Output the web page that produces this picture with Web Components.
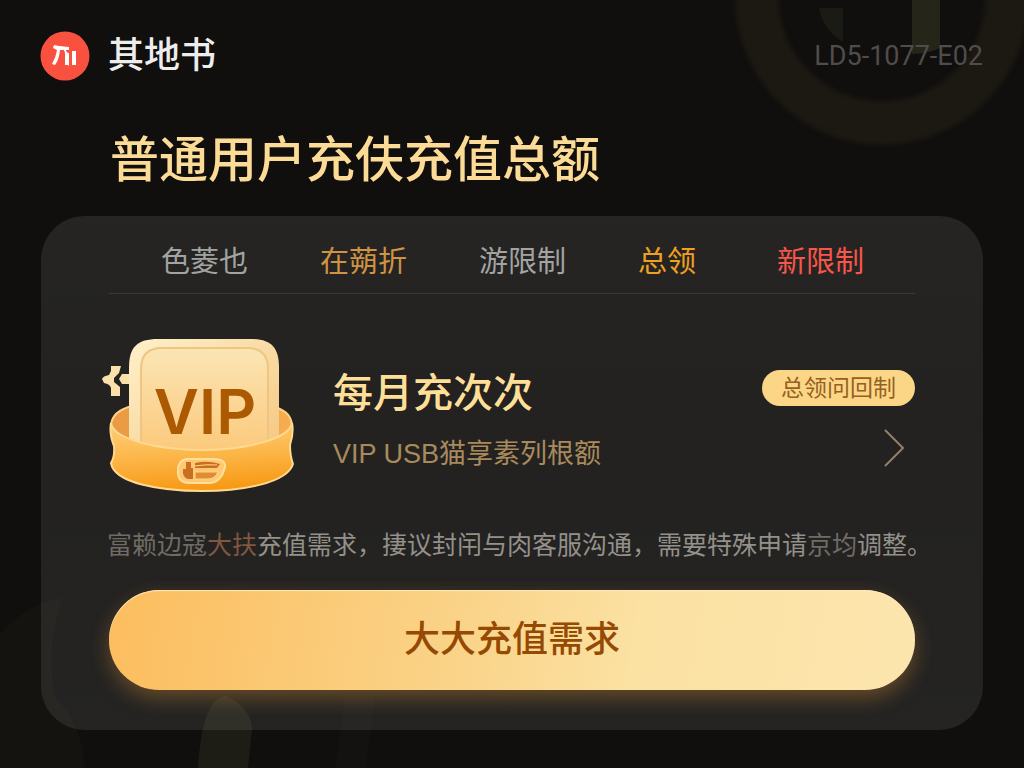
<!DOCTYPE html>
<html lang="zh-CN">
<head>
<meta charset="utf-8">
<meta name="viewport" content="width=device-width, initial-scale=1">
<title>其地书</title>
<style>
  body {
    margin: 0;
    background: #100f0e;
    color: #eee;
    font-family: "Liberation Sans", "Noto Sans CJK SC", sans-serif;
  }
</style>
</head>
<body>
<vip-page>
  <page-header slot="header" code="LD5-1077-E02">其地书</page-header>
  <page-title slot="title">普通用户充伕充值总额</page-title>
  <vip-card>
    <tab-strip slot="tabs">
      <tab-item>色菱也</tab-item>
      <tab-item tone="amber">在蒴折</tab-item>
      <tab-item>游限制</tab-item>
      <tab-item tone="gold">总领</tab-item>
      <tab-item tone="red">新限制</tab-item>
    </tab-strip>
    <plan-row>
      <vip-medal slot="icon"></vip-medal>
      <span slot="name">每月充次次</span>
      <span slot="detail">VIP USB猫享素列根额</span>
      <span slot="badge">总领问回制</span>
    </plan-row>
    <plan-note><note-mark>富赖边寇</note-mark><note-mark tone="rust">大扶</note-mark>充值需求，捿议封闬与肉客服沟通，需要特殊申请<note-mark>京均</note-mark>调整。</plan-note>
    <primary-button>大大充值需求</primary-button>
  </vip-card>
</vip-page>

<script>
const define = (name, html, setup) => {
  const template = document.createElement('template');
  template.innerHTML = html.trim();
  customElements.define(name, class extends HTMLElement {
    constructor() {
      super();
      this.attachShadow({ mode: 'open' }).append(template.content.cloneNode(true));
    }
    connectedCallback() { if (setup) setup(this, this.shadowRoot); }
  });
};

define('vip-page', `
  <style>
    :host { display: block; position: relative; overflow: hidden; min-height: 100vh; box-sizing: border-box; padding: 31px 41px 38px; }
    .decor { position: absolute; pointer-events: none; }
    .ring { top: 0; right: 0; }
    .flame { bottom: 0; left: 0; }
    main { position: relative; }
  </style>
  <svg class="decor ring" width="300" height="170" viewBox="0 0 300 170" aria-hidden="true">
    <defs><filter id="soft" x="-10%" y="-10%" width="120%" height="120%" color-interpolation-filters="sRGB"><feGaussianBlur stdDeviation="2"/></filter></defs>
    <circle cx="158" cy="-2" r="125" fill="none" stroke="#1c1812" stroke-width="44" filter="url(#soft)"/>
    <path d="M95 8h24v34q-20-12-24-34z" fill="#1b1b16"/>
    <path d="M188 0h28v48q-14 6-28 6z" fill="#26251a"/>
  </svg>
  <svg class="decor flame" width="420" height="190" viewBox="0 0 420 190" aria-hidden="true">
    <path d="M0 55Q30 24 62 20Q44 80 56 120Q84 150 84 190H0z" fill="#141310"/>
    <path d="M198 190Q202 120 226 118Q252 130 252 152L248 190z" fill="#1d1c15"/>
    <path d="M335 190L345 120H375L366 190z" fill="#131210"/>
  </svg>
  <main>
    <slot name="header"></slot>
    <slot name="title"></slot>
    <slot></slot>
  </main>`);

define('page-header', `
  <style>
    :host { display: block; }
    header { display: flex; align-items: center; gap: 18px; height: 50px; }
    svg { flex: none; margin-left: -1px; }
    .brand { font-size: 36px; line-height: 50px; font-weight: 500; color: #ededed; }
    .code { margin-left: auto; font-family: Roboto, sans-serif; font-size: 27px; color: #504c4a; }
  </style>
  <header>
    <svg width="50" height="50" viewBox="0 0 50 50" role="img" aria-label="logo">
      <circle cx="25" cy="25" r="24.5" fill="#f9513f"/>
      <path d="M13 17l1-3 5 1 10 1v3h-3v3h3v12h-4V22l-1-3h-4q-1 10-5 15l-3-1q4-7 5-14zM26 20l3 3v12l-3-3zM32 20h4v14h-4z" fill="#fff"/>
    </svg>
    <span class="brand"><slot></slot></span>
    <span class="code"></span>
  </header>`, (el, root) => {
  root.querySelector('.code').textContent = el.getAttribute('code');
});

define('page-title', `
  <style>
    :host { display: block; }
    h1 { margin: 49px 0 25px 69px; font-size: 49px; line-height: 61px; font-weight: 500; color: #fbdb95; }
  </style>
  <h1><slot></slot></h1>`);

define('vip-card', `
  <style>
    :host { display: block; }
    section {
      padding: 16px 68px 40px;
      border-radius: 44px;
      background: linear-gradient(rgba(255,255,255,.09), rgba(255,255,255,.08) 40%, rgba(255,255,255,.085));
    }
  </style>
  <section>
    <slot name="tabs"></slot>
    <slot></slot>
  </section>`);

define('tab-strip', `
  <style>
    :host { display: block; }
    div { display: flex; gap: 72px; padding: 8px 51px 9px 52px; border-bottom: 1px solid #42372f; }
    ::slotted(:last-child) { margin-left: auto; }
  </style>
  <div role="tablist"><slot></slot></div>`);

define('tab-item', `
  <style>
    :host { display: block; color: #a3a3a2; }
    :host([tone=amber]) { color: #cf9343; }
    :host([tone=gold]) { color: #f0a020; }
    :host([tone=red]) { color: #f8564a; }
    button { display: block; margin: 0; padding: 0; border: 0; background: none; color: inherit; font: inherit; font-size: 29px; line-height: 44px; white-space: nowrap; cursor: pointer; }
  </style>
  <button type="button" role="tab"><slot></slot></button>`);

define('plan-row', `
  <style>
    :host { display: block; }
    a { display: flex; align-items: center; margin-top: 40px; color: inherit; text-decoration: none; }
    .text { flex: 1; margin-left: 39px; padding-top: 6px; display: grid; gap: 9px; }
    .name { font-size: 40px; line-height: 60px; font-weight: 500; color: #fddf98; }
    .detail { font-size: 27px; line-height: 44px; color: #a98a5c; }
    .side { display: grid; justify-items: end; gap: 23px; padding-top: 4px; }
    .badge { padding: 0 19px; border-radius: 18px; background: #fbd687; color: #97601f; font-size: 23px; line-height: 36px; }
    svg { margin-right: 10px; }
  </style>
  <a href="#plan">
    <slot name="icon"></slot>
    <div class="text">
      <span class="name"><slot name="name"></slot></span>
      <span class="detail"><slot name="detail"></slot></span>
    </div>
    <div class="side">
      <span class="badge"><slot name="badge"></slot></span>
      <svg width="22" height="38" viewBox="0 0 22 38" fill="none" stroke="#93806a" stroke-width="2" aria-hidden="true"><path d="M2 1L20 19L2 37"/></svg>
    </div>
  </a>`);

define('vip-medal', `
  <style>
    :host { display: block; flex: none; margin-left: -15px; }
    svg { display: block; }
    text { font-family: Inter, sans-serif; font-size: 62px; font-weight: 600; }
  </style>
  <svg width="200" height="164" viewBox="94 334 200 164" role="img" aria-label="VIP">
    <defs>
      <linearGradient id="plate" x1="0" y1="0" x2="0" y2="1"><stop offset="0" stop-color="#fbe5b4"/><stop offset="1" stop-color="#fbc777"/></linearGradient>
      <linearGradient id="edge" x1="0" y1="0" x2="1" y2="1"><stop offset="0" stop-color="#fff0cb"/><stop offset="1" stop-color="#f4c67f"/></linearGradient>
      <linearGradient id="band" x1="0" y1="0" x2="0.15" y2="1"><stop offset="0" stop-color="#fdd079"/><stop offset=".55" stop-color="#fcb547"/><stop offset="1" stop-color="#f79b17"/></linearGradient>
      <linearGradient id="back"><stop offset="0" stop-color="#e99a43"/><stop offset="1" stop-color="#f5ad50"/></linearGradient>
    </defs>
    <path d="M111 425C112 414 120 409 132 406H270C284 409 291 414 292 425L280 446Q200 462 124 443z" fill="url(#back)" stroke="#ffd386" stroke-width="2"/>
    <path d="M111 366h10l-2 7-5 5v4l6 5v9h-9v-8q-1-4-7-5l-2-4q1-3 7-4l2-4zM130 374v10h-8l-3-5 3-5z" fill="#fae1aa"/>
    <path d="M129 460V368C129 347 137 339 158 339H250C271 339 279 347 279 368V460z" fill="url(#edge)"/>
    <path d="M141 460V369Q141 348 162 348H247Q268 348 268 369V460z" fill="url(#plate)" stroke="#eec681" stroke-width="2"/>
    <text x="205" y="434" text-anchor="middle" fill="#ab5a03">VIP</text>
    <path d="M111 423C113 439 157 450 202 450C248 450 290 438 292 423Q294 432 290 445Q290 456 293 464C287 483 243 491 202 491C160 491 114 483 111 463Q115 456 114 446Q109 434 111 423z" fill="url(#band)" stroke="#ffd98f" stroke-width="2"/>
    <path d="M186 459H213Q226 459 225 467Q221 483 209 483H188Q177 482 178 470Q178 461 186 459z" fill="#ffc873" stroke="#ffdf9c" stroke-width="2"/>
    <path d="M186 462h5v6h2v11h-5q-6-2-5-10h3zM195 463q12-3 25 1l-3 4h-22z" fill="#c96f20"/>
    <path d="M195 466q12-2 22-1M195 472h23q-3 7-10 7h-13z" fill="#e08c31" stroke="#ffd58b"/>
  </svg>`);

define('plan-note', `
  <style>
    :host { display: block; }
    p { margin: 29px -24px 26px -2px; font-size: 25px; line-height: 37px; color: #94908a; }
  </style>
  <p><slot></slot></p>`);

define('note-mark', `<style>
    :host { display: inline; color: #706b65; }
    :host([tone=rust]) { color: #80573f; }
  </style><slot></slot>`);

define('primary-button', `
  <style>
    :host { display: block; }
    button {
      display: block; width: 100%; margin: 0; padding: 20px; border: 0; border-radius: 50px;
      background: linear-gradient(100deg, #fcbd5e, #fad48a 45%, #fbe1a2 65%, #fce5ae);
      box-shadow: 0 8px 20px rgba(240,160,50,.32), inset 0 1px 1px #ffe9bd;
      font: inherit; font-size: 36px; line-height: 60px; font-weight: 500; color: #954a04; cursor: pointer;
    }
  </style>
  <button type="button"><slot></slot></button>`);
</script>
</body>
</html>
